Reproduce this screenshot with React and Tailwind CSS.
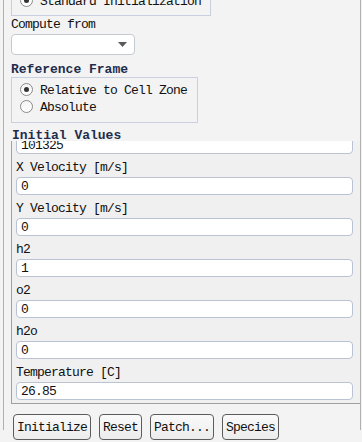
import React from 'react';

const font = { fontFamily: '"Liberation Mono", "DejaVu Sans Mono", monospace' };

const Radio = ({ checked, label }) => (
  <div className="flex items-center h-[17px]">
    <div className="w-[13px] h-[13px] rounded-full border border-[#8a8a8a] bg-gradient-to-b from-[#f4f4f4] to-white flex items-center justify-center shrink-0">
      {checked && <div className="w-[5px] h-[5px] rounded-full bg-[#333]"></div>}
    </div>
    <span className="ml-[7px] pt-[2px] text-[13px] leading-[14px] tracking-[-0.8px] text-[#111]">{label}</span>
  </div>
);

const Field = ({ label, value }) => (
  <>
    <div className="h-[23px] pt-[7px] text-[13px] leading-[14px] tracking-[-0.8px] text-[#111]">{label}</div>
    <div className="h-[18px] w-[337px] bg-white border border-[#b9c3d3] rounded-[4px] pl-[4px] text-[13px] leading-[18px] tracking-[-0.8px] text-[#111]">
      {value}
    </div>
  </>
);

const Button = ({ children, w }) => (
  <button className={`${w} h-[26px] pt-[2px] border border-[#5c5c5c] rounded-[4px] bg-gradient-to-b from-[#fafafa] to-[#ececec] text-[13px] leading-[14px] tracking-[-0.8px] text-[#111]`}>
    {children}
  </button>
);

export default function App() {
  return (
    <div className="w-[362px] h-[442px] bg-[#f3f3f3] overflow-hidden" style={font}>
      <div className="ml-[3px] w-[358px] h-[442px] border-l border-r border-[#b0b0b0] pl-[7px]">
        {/* Standard Initialization group (scrolled past) */}
        <div className="mt-[-12px] h-[28px] w-[200px] border border-[#c8d0e0] pl-[8px] pt-[3px]">
          <Radio checked label="Standard Initialization" />
        </div>

        <div className="h-[14px] text-[13px] leading-[17px] tracking-[-0.8px] text-[#111]">Compute from</div>

        {/* Compute from dropdown */}
        <div className="mt-[4px] w-[124px] h-[21px] bg-white border border-[#c6cad2] rounded-[4px] flex items-center justify-end pr-[7px]">
          <svg width="9" height="5" viewBox="0 0 9 5">
            <path d="M0 0 L9 0 L4.5 5 Z" fill="#5a5a5a" />
          </svg>
        </div>

        <div className="mt-[6px] h-[14px] text-[13px] leading-[17px] font-bold text-[#1f2d4d]">Reference Frame</div>

        <div className="mt-[2px] w-[187px] h-[46px] border border-[#c8d0e0] pl-[8px] pt-[3px]">
          <Radio checked label="Relative to Cell Zone" />
          <Radio label="Absolute" />
        </div>

        <div className="mt-[4px] ml-[1px] h-[14px] text-[13px] leading-[17px] font-bold text-[#1f2d4d]">Initial Values</div>

        {/* Initial values scroll area */}
        <div className="h-[263px] border-l border-b border-[#a0a0a0] bg-[#f0f0f0] overflow-hidden pl-[4px]">
          <div className="mt-[-5px] h-[18px] w-[337px] bg-white border border-[#b9c3d3] rounded-[4px] pl-[4px] text-[13px] leading-[18px] tracking-[-0.8px] text-[#111]">
            101325
          </div>
          <Field label="X Velocity [m/s]" value="0" />
          <Field label="Y Velocity [m/s]" value="0" />
          <Field label="h2" value="1" />
          <Field label="o2" value="0" />
          <Field label="h2o" value="0" />
          <Field label="Temperature [C]" value="26.85" />
        </div>

        <div className="mt-[10px] ml-[2px] flex gap-2">
          <Button w="w-[78px]">Initialize</Button>
          <Button w="w-[43px]">Reset</Button>
          <Button w="w-[64px]">Patch...</Button>
          <Button w="w-[57px]">Species</Button>
        </div>
      </div>
    </div>
  );
}
